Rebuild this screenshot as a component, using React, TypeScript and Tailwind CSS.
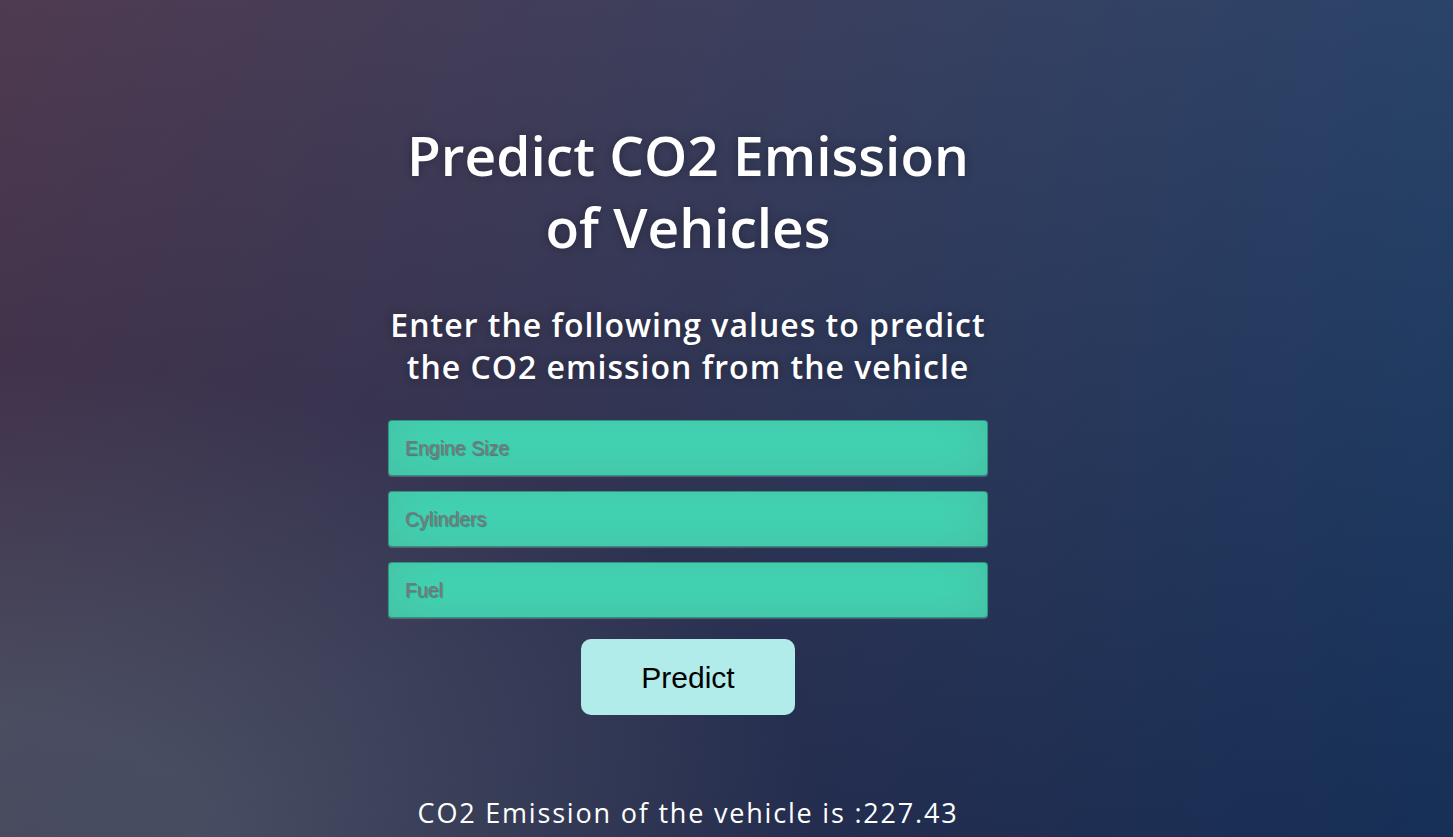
import React from "react";

export default function App() {
  return (
    <div className="min-h-[837px] w-full overflow-hidden [background:radial-gradient(ellipse_farthest-corner_at_0%_100%,rgba(104,128,138,0.4)_10%,rgba(138,114,76,0)_40%),linear-gradient(to_bottom,rgba(57,173,219,0.25)_0%,rgba(42,60,87,0.4)_100%),linear-gradient(135deg,#561422_0%,#092756_100%)]">
      <div className="ml-[388px] flex w-[600px] flex-col items-center pt-[119px]">
        <h1 className="whitespace-nowrap text-center text-[55px] font-semibold leading-[72px] text-white [font-family:'Open_Sans',sans-serif] [text-shadow:0_0_10px_rgba(0,0,0,0.3)]">
          Predict CO2 Emission
          <br />
          of Vehicles
        </h1>
        <h2 className="mt-[41px] whitespace-nowrap text-center text-[32px] font-semibold leading-[42px] tracking-[1px] text-white [font-family:'Open_Sans',sans-serif] [text-shadow:0_0_10px_rgba(0,0,0,0.3)]">
          Enter the following values to predict
          <br />
          the CO2 emission from the vehicle
        </h2>
        <form className="mt-[32px] flex w-full flex-col gap-[15px]" onSubmit={(e) => e.preventDefault()}>
          {["Engine Size", "Cylinders", "Fuel"].map((p) => (
            <input
              key={p}
              type="text"
              placeholder={p}
              className="h-[56px] w-full rounded-[4px] border border-[rgba(0,0,0,0.3)] bg-[#40d6b4] px-4 text-[19.5px] text-[#333] outline-none [font-family:'Liberation_Sans',Arial,sans-serif] placeholder:text-[#7d7480] [text-shadow:1px_1px_1px_rgba(0,0,0,0.35)] shadow-[inset_0_-5px_45px_rgba(100,100,100,0.2),0_1px_1px_rgba(255,255,255,0.2)]"
            />
          ))}
          <div className="mt-[6px] flex justify-center">
            <button
              type="submit"
              className="h-[76px] w-[214px] rounded-[10px] bg-[#b2ecea] text-[30px] text-black [font-family:'Liberation_Sans',Arial,sans-serif]"
            >
              Predict
            </button>
          </div>
        </form>
        <p className="mt-[82px] whitespace-nowrap text-center text-[27px] leading-[32px] tracking-[1.8px] text-white [font-family:'Open_Sans',sans-serif]">
          CO2 Emission of the vehicle is :227.43
        </p>
      </div>
    </div>
  );
}
